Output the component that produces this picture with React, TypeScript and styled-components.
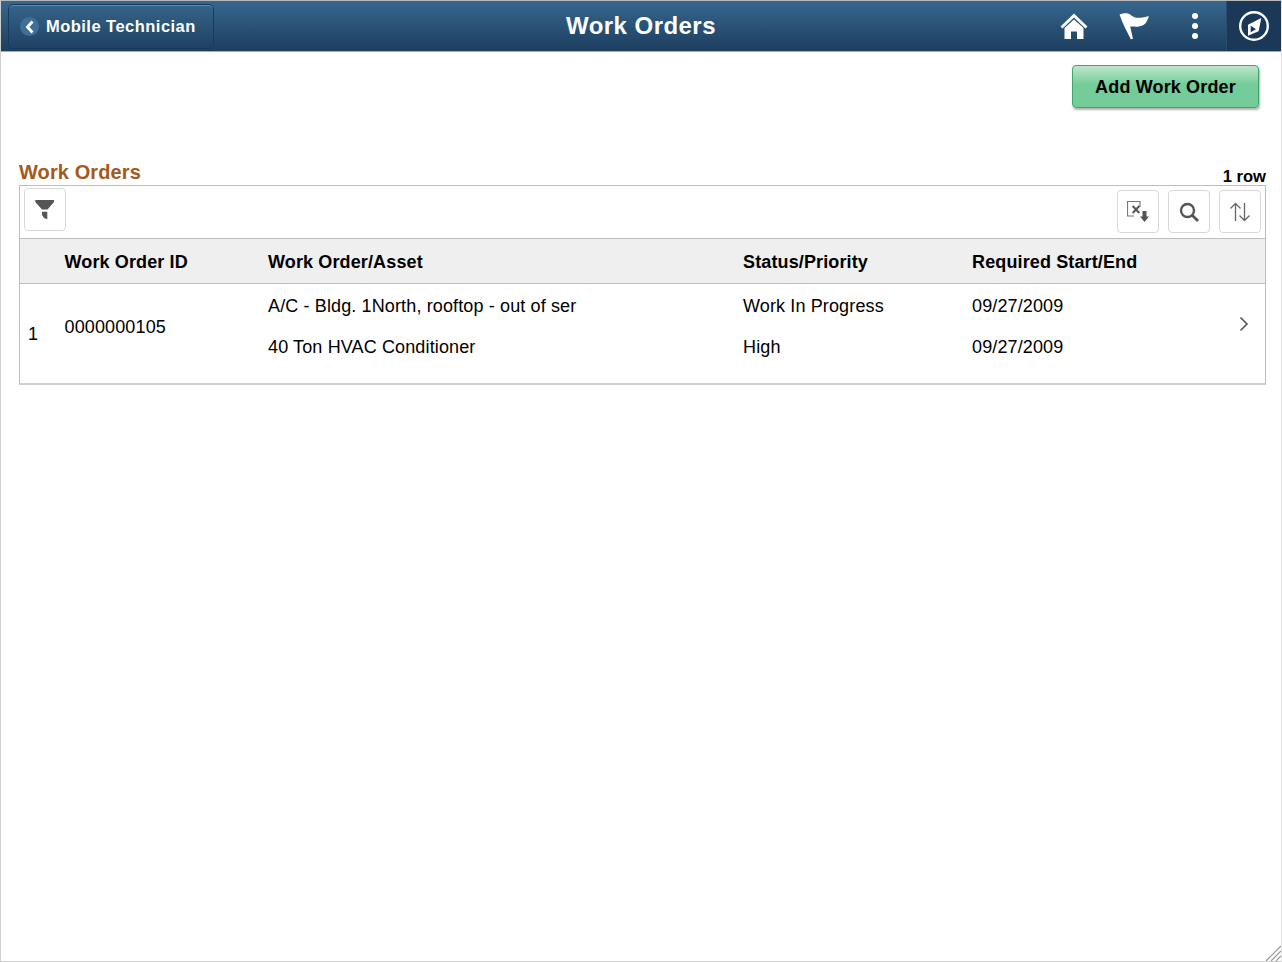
import styled, { createGlobalStyle } from "styled-components";

const GlobalStyle = createGlobalStyle`
  html, body {
    margin: 0;
    padding: 0;
    background: #fff;
  }
  body {
    font-family: "Liberation Sans", Arial, sans-serif;
    color: #000;
  }
`;

const columns = "44.5px 203.5px 475px 229px 1fr";

const App = () => {
  return (
    <>
      <GlobalStyle />
      <Page>
        <Banner>
          <BackButton>
            <BackCircle>
              <svg width="10" height="14" viewBox="0 0 10 14">
                <path d="M7.5 1.5 L2.5 7 L7.5 12.5" fill="none" stroke="#fff" strokeWidth="2.8" />
              </svg>
            </BackCircle>
            Mobile Technician
          </BackButton>
          <Title>Work Orders</Title>
          <BannerIcons>
            <BannerIcon>
              <HomeGlyph width="30" height="30" viewBox="0 0 30 30">
                <path d="M1.5 15.5 L15 2.5 L28.5 15.5 L26.5 17.5 L15 6.5 L3.5 17.5 Z" fill="#fff" />
                <path d="M5.5 17 L15 8.5 L24.5 17 V28 H18 V20.5 H12 V28 H5.5 Z" fill="#fff" />
              </HomeGlyph>
            </BannerIcon>
            <BannerIcon>
              <svg width="32" height="30" viewBox="0 0 32 30">
                <path d="M1.5 3.6 C4 2.6 7.5 2 9.8 2.4 C12.5 3 15 6.2 18.2 6.7 C23 7.2 27 6 30.8 5 C30 8 29 10.5 27.5 12.3 C25.5 14.5 22.5 15.5 19.8 15.7 C17.2 15.9 14.7 15.4 12.2 15.7 L15 27.7 L12.8 28.3 L6.5 15.7 C4.8 12 3 7.5 1.5 3.6 Z" fill="#fff" />
              </svg>
            </BannerIcon>
            <BannerIcon>
              <svg width="8" height="28" viewBox="0 0 8 28">
                <circle cx="4" cy="4" r="3" fill="#fff" />
                <circle cx="4" cy="14" r="3" fill="#fff" />
                <circle cx="4" cy="24" r="3" fill="#fff" />
              </svg>
            </BannerIcon>
          </BannerIcons>
          <NavButton>
            <svg width="32" height="32" viewBox="0 0 32 32">
              <circle cx="16" cy="16" r="13.8" fill="none" stroke="#fff" strokeWidth="2.4" />
              <path d="M10 14.7 L23.3 8 L20.6 21.3 L10 25.7 Z M12.7 15.7 V22.3 L18 19.3 Z" fill="#fff" fillRule="evenodd" />
            </svg>
          </NavButton>
        </Banner>

        <Content>
          <ActionRow>
            <AddButton>Add Work Order</AddButton>
          </ActionRow>

          <GridTitleRow>
            <GridTitle>Work Orders</GridTitle>
            <RowCount>1 row</RowCount>
          </GridTitleRow>

          <Grid>
            <Toolbar>
              <ToolButton>
                <svg width="22" height="22" viewBox="0 0 22 22">
                  <path d="M1.3 1 H20 V3 L13.5 10.5 H8 L1.3 3 Z" fill="#555" />
                  <path d="M8 12.8 H13.3 V20.2 L10 19 L8 16 Z" fill="#555" />
                </svg>
              </ToolButton>
              <ToolGroup>
                <ToolButton>
                  <svg width="22" height="22" viewBox="0 0 22 22">
                    <path d="M7 15 H0.5 V0.5 H13 V6" fill="none" stroke="#777" strokeWidth="1.2" />
                    <path d="M5.7 5 L12.3 12 M12.3 5 L5.7 12" stroke="#555" strokeWidth="2" />
                    <path d="M15.5 10 H19.5 V15.5 H22 L17.5 21 L13 15.5 H15.5 Z" fill="#555" />
                  </svg>
                </ToolButton>
                <ToolButton>
                  <svg width="22" height="22" viewBox="0 0 22 22">
                    <circle cx="9.5" cy="9.5" r="6.5" fill="none" stroke="#555" strokeWidth="2.4" />
                    <path d="M14.2 14.2 L20 20" stroke="#555" strokeWidth="2.8" />
                  </svg>
                </ToolButton>
                <ToolButton>
                  <svg width="22" height="22" viewBox="0 0 22 22">
                    <path d="M6.5 20 V2.5 M1.5 7.5 L6.5 2.5 L11.5 7.5" fill="none" stroke="#666" strokeWidth="1.3" />
                    <path d="M15.5 2 V19.5 M10.5 14.5 L15.5 19.5 L20.5 14.5" fill="none" stroke="#666" strokeWidth="1.3" />
                  </svg>
                </ToolButton>
              </ToolGroup>
            </Toolbar>

            <HeaderRow>
              <span />
              <span>Work Order ID</span>
              <span>Work Order/Asset</span>
              <span>Status/Priority</span>
              <span>Required Start/End</span>
            </HeaderRow>

            <DataRow>
              <RowNumber>1</RowNumber>
              <OrderId>0000000105</OrderId>
              <CellStack>
                <span>A/C - Bldg. 1North, rooftop - out of ser</span>
                <span>40 Ton HVAC Conditioner</span>
              </CellStack>
              <CellStack>
                <span>Work In Progress</span>
                <span>High</span>
              </CellStack>
              <CellStack>
                <span>09/27/2009</span>
                <span>09/27/2009</span>
              </CellStack>
              <RowChevron>
                <svg width="12" height="16" viewBox="0 0 12 16">
                  <path d="M2.5 1.5 L9 8 L2.5 14.5" fill="none" stroke="#555" strokeWidth="1.6" />
                </svg>
              </RowChevron>
            </DataRow>
          </Grid>
        </Content>

        <ResizeGrip>
          <svg width="16" height="16" viewBox="0 0 16 16">
            <path d="M1 16 L16 1 M6 16 L16 6 M11 16 L16 11" stroke="#999" strokeWidth="1.2" />
          </svg>
        </ResizeGrip>
      </Page>
    </>
  );
};

export default App;

const Page = styled.div`
  position: relative;
  box-sizing: border-box;
  width: 1282px;
  height: 962px;
  overflow: hidden;
  border: 1px solid #cfcfcf;
  border-top-color: #b8b8b8;
  border-right-color: #e4e4e4;
  display: flex;
  flex-direction: column;
`;

const Banner = styled.header`
  position: relative;
  flex: none;
  box-sizing: border-box;
  height: 51px;
  display: flex;
  align-items: center;
  padding-left: 7px;
  background: linear-gradient(#37678e, #1d3e5f);
  border-bottom: 1px solid #8fb1d3;
`;

const BackButton = styled.button`
  box-sizing: border-box;
  width: 206px;
  height: 45px;
  margin-top: 1px;
  display: flex;
  align-items: center;
  gap: 7px;
  padding: 0 0 0 11px;
  color: #fff;
  font: bold 16.5px "Liberation Sans", Arial, sans-serif;
  letter-spacing: 0.47px;
  background: linear-gradient(#35648a, #1f4263);
  border: 1px solid #1b3a59;
  border-radius: 5px;
  box-shadow: inset 0 1px 0 #5d8cb0;
`;

const BackCircle = styled.span`
  width: 19px;
  height: 19px;
  border-radius: 50%;
  background: #3f6f99;
  display: flex;
  align-items: center;
  justify-content: center;
`;

const Title = styled.h1`
  position: absolute;
  left: 0;
  right: 0;
  margin: 0;
  text-align: center;
  color: #fff;
  font-size: 24px;
  letter-spacing: 0.45px;
  font-weight: bold;
  pointer-events: none;
`;

const BannerIcons = styled.div`
  margin-left: auto;
  display: flex;
  align-items: center;
`;

const BannerIcon = styled.span`
  width: 61px;
  height: 50px;
  display: flex;
  align-items: center;
  justify-content: center;
`;

const HomeGlyph = styled.svg`
  margin-left: 2px;
`;

const NavButton = styled.span`
  width: 55px;
  height: 50px;
  margin-left: 1px;
  display: flex;
  align-items: center;
  justify-content: center;
  background: #1b3858;
  border-left: 1px solid #2a4c6e;
  box-sizing: border-box;
`;

const Content = styled.main`
  flex: 1;
  padding: 0 15px 0 18px;
`;

const ActionRow = styled.div`
  display: flex;
  justify-content: flex-end;
  padding: 13px 7px 0 0;
  height: 95px;
  box-sizing: border-box;
`;

const AddButton = styled.button`
  box-sizing: border-box;
  width: 187px;
  height: 43px;
  padding: 2px 0 0;
  color: #000;
  font: bold 18px "Liberation Sans", Arial, sans-serif;
  letter-spacing: 0.15px;
  background: linear-gradient(#bfe5cd, #74cc99 45%, #74cc99);
  border: 1px solid #3fa56c;
  border-radius: 4px;
  box-shadow: 1px 2px 2px rgba(0, 0, 0, 0.3);
`;

const GridTitleRow = styled.div`
  display: flex;
  justify-content: space-between;
  align-items: flex-end;
  height: 38px;
`;

const GridTitle = styled.h2`
  margin: 0 0 1px;
  color: #a5591a;
  font-size: 20px;
  letter-spacing: 0.1px;
  line-height: 24px;
  font-weight: bold;
`;

const RowCount = styled.span`
  font-size: 16.6px;
  font-weight: bold;
  line-height: 16px;
`;

const Grid = styled.section`
  border: 1px solid #bdbdbd;
  border-bottom: 2px solid #d0d0d0;
`;

const Toolbar = styled.div`
  display: flex;
  justify-content: space-between;
  align-items: flex-start;
  box-sizing: border-box;
  height: 52px;
  padding: 2px 4px 0 4px;
`;

const ToolGroup = styled.div`
  display: flex;
  gap: 9px;
  padding-top: 2px;
`;

const ToolButton = styled.button`
  box-sizing: border-box;
  width: 42px;
  height: 43px;
  padding: 0;
  display: flex;
  align-items: center;
  justify-content: center;
  background: #fff;
  border: 1px solid #d8d8d8;
  border-radius: 4px;
`;

const HeaderRow = styled.div`
  display: grid;
  grid-template-columns: ${columns};
  align-items: center;
  box-sizing: border-box;
  height: 46px;
  padding-top: 2px;
  background: #efefef;
  border-top: 1px solid #bdbdbd;
  border-bottom: 1px solid #bdbdbd;
  font-size: 18px;
  letter-spacing: 0.13px;
  font-weight: bold;
`;

const DataRow = styled.div`
  position: relative;
  display: grid;
  grid-template-columns: ${columns};
  height: 99px;
  font-size: 18px;
  letter-spacing: 0.13px;
`;

const RowNumber = styled.span`
  padding: 40px 0 0 8px;
`;

const OrderId = styled.span`
  padding-top: 33px;
`;

const CellStack = styled.div`
  display: flex;
  flex-direction: column;
  gap: 20px;
  padding-top: 12px;
  line-height: 21px;
`;

const RowChevron = styled.span`
  position: absolute;
  right: 15px;
  top: 32px;
  line-height: 0;
`;

const ResizeGrip = styled.span`
  position: absolute;
  right: 0;
  bottom: 0;
  line-height: 0;
`;
